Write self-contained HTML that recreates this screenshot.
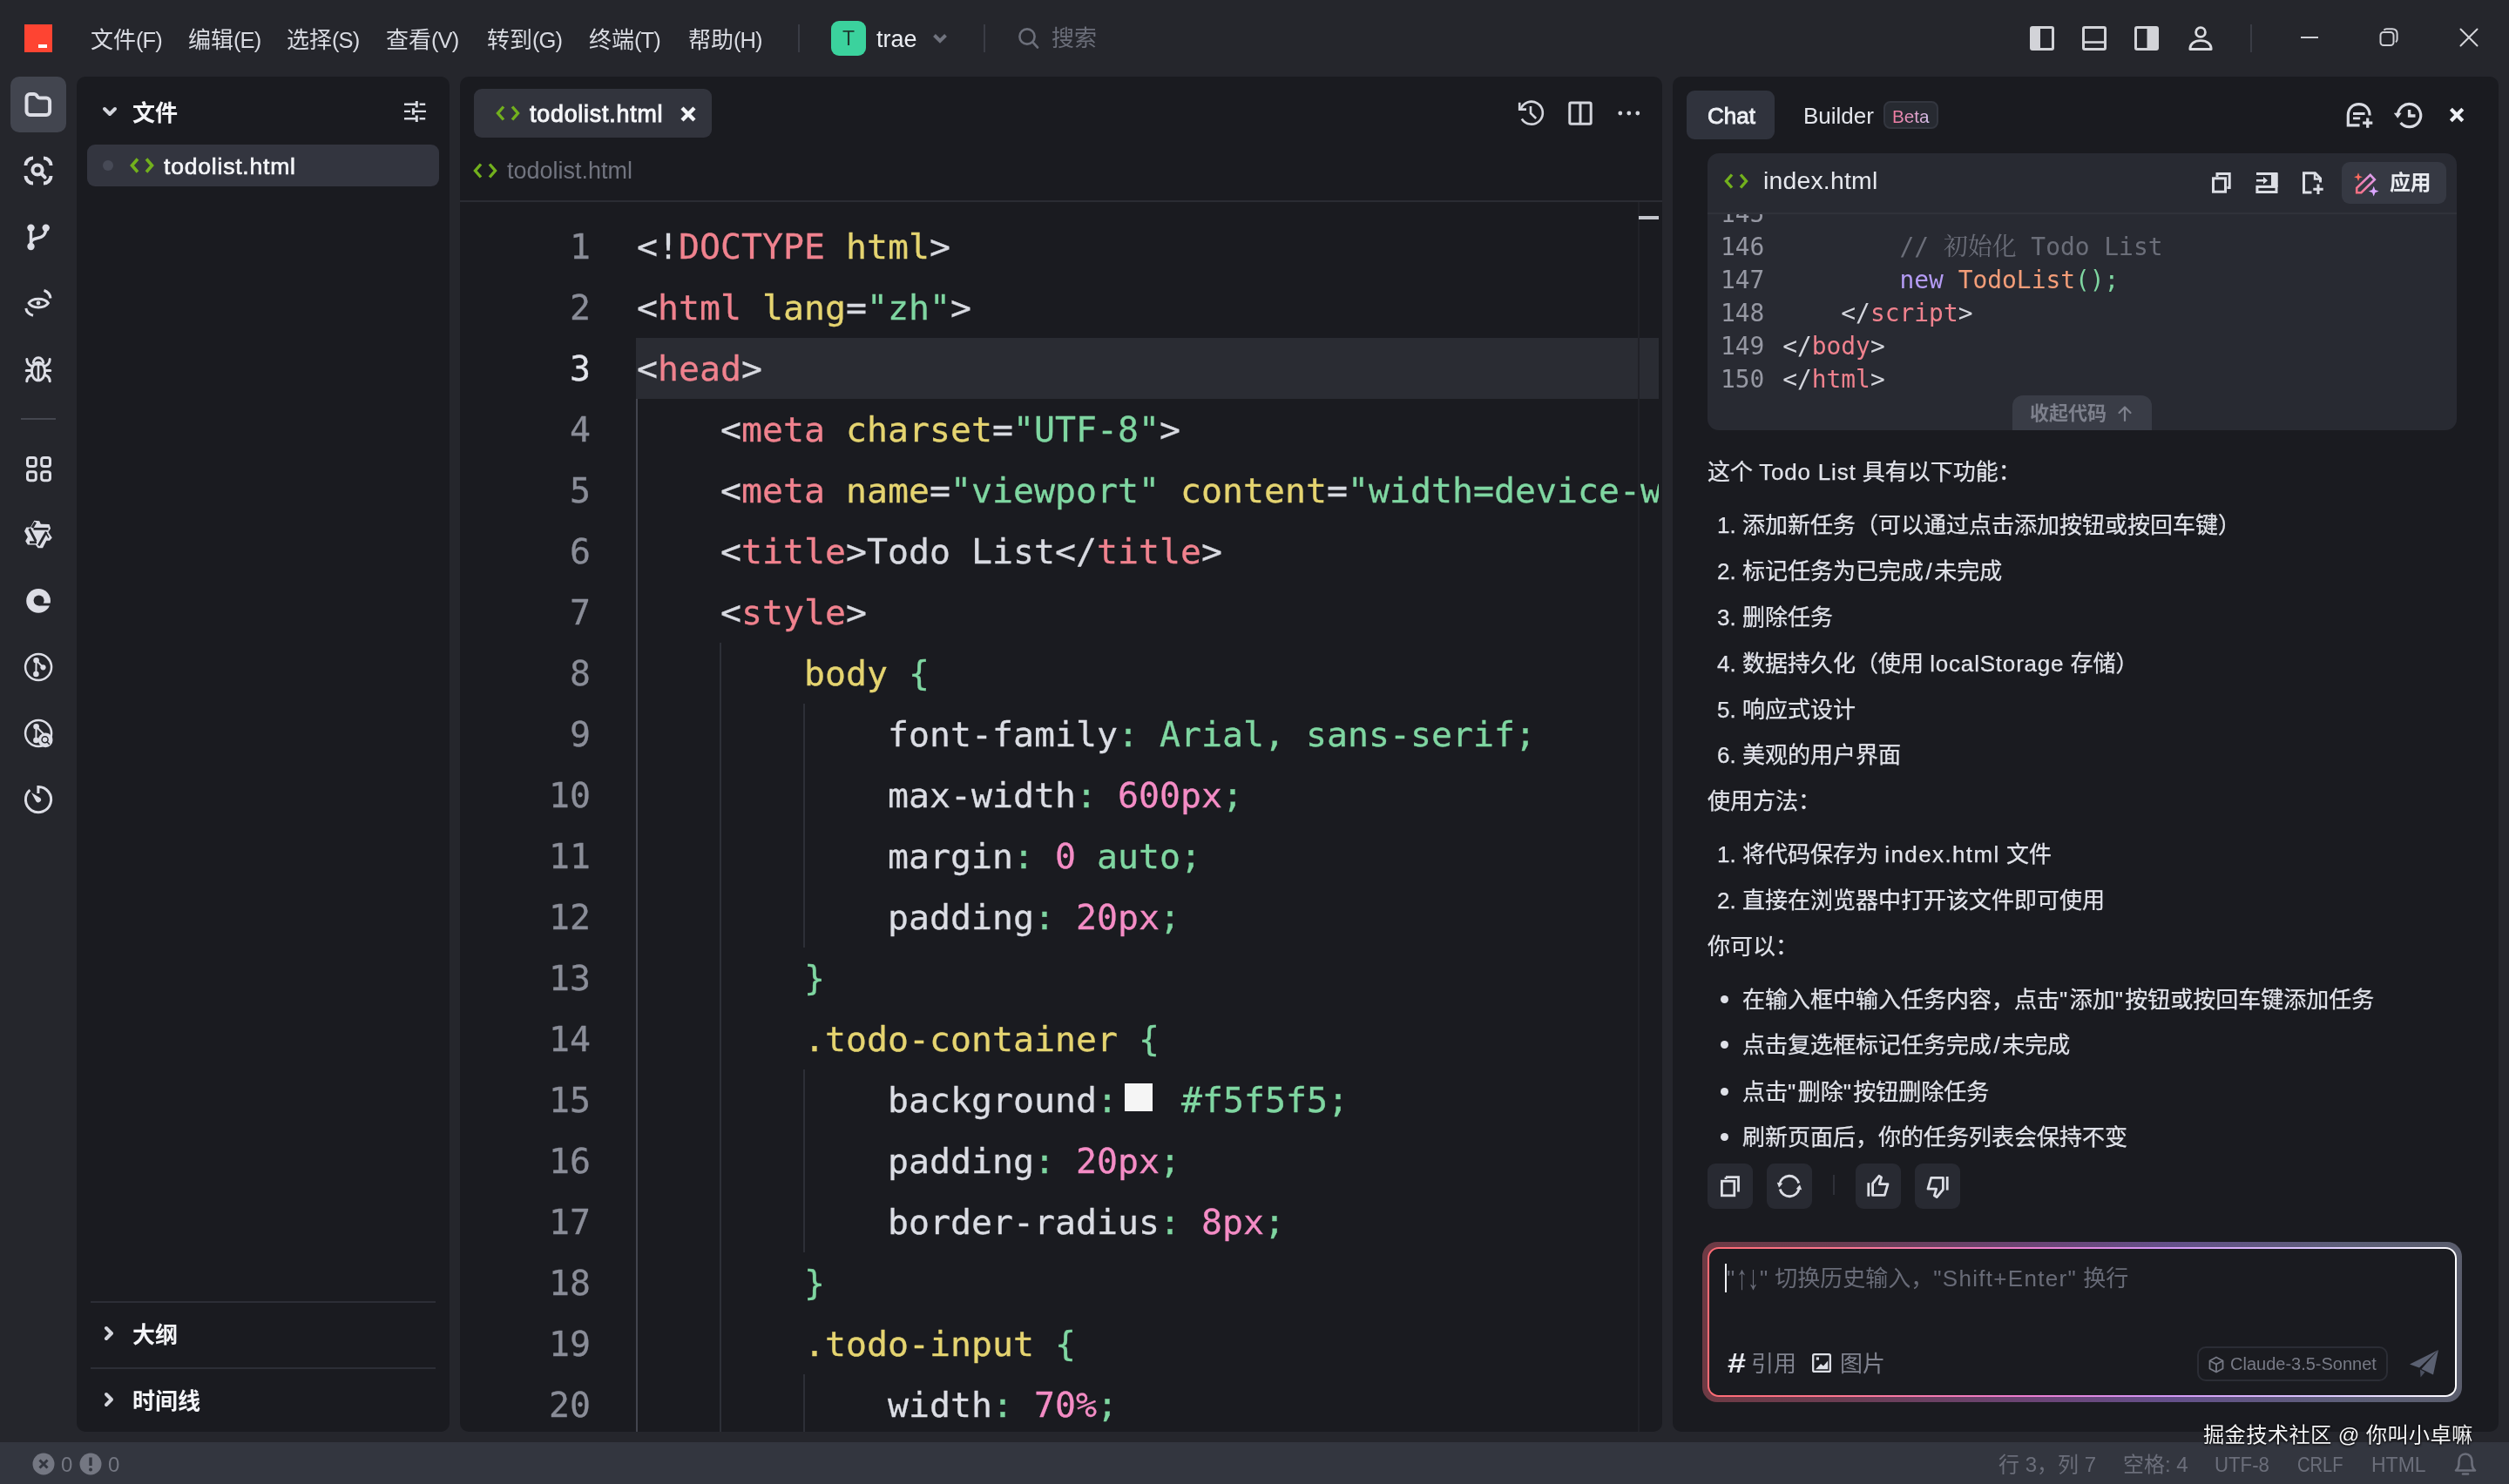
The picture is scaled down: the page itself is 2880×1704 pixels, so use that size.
<!DOCTYPE html>
<html lang="zh">
<head>
<meta charset="UTF-8">
<title>trae</title>
<style>
*{box-sizing:border-box;margin:0;padding:0}
html,body{width:2880px;height:1704px;overflow:hidden;background:#25262c}
body{position:relative;font-family:"Liberation Sans","Noto Sans CJK SC",sans-serif;color:#d6d8df;font-size:26px}
.abs{position:absolute}
#root{position:absolute;left:0;top:0;width:2880px;height:1704px;will-change:transform;overflow:hidden}
svg{display:block;position:absolute;overflow:visible}
.panel{position:absolute;background:#1a1b20;border-radius:10px;top:88px;height:1556px;overflow:hidden}
#side{left:88px;width:428px}
#editor{left:528px;width:1380px}
#chat{left:1920px;width:948px}
#status{position:absolute;left:0;top:1656px;width:2880px;height:48px;background:#33363f}
.t{position:absolute;white-space:nowrap;line-height:1}
.menu{color:#d9dbe2;font-size:26px;top:33px}
.mono{font-family:"DejaVu Sans Mono","Liberation Mono","Noto Sans CJK SC",monospace}
.pl{letter-spacing:-.9px;font-size:25.500px}
.sb{-webkit-text-stroke:0.7px currentColor;letter-spacing:0.8px}
.code{position:absolute;left:0;top:0;width:1376px;height:1556px;overflow:hidden;font-size:39.870px;color:#d8dae1;-webkit-text-stroke:.3px}
.code b{font-weight:normal}
.ln{position:absolute;left:0;width:150px;text-align:right;height:70px;line-height:70px;color:#8a8d98;white-space:pre}
.ln.cur{color:#e3e5ec}
.cl{position:absolute;left:203px;height:70px;line-height:70px;white-space:pre}

b.kt{color:#f0828e}b.ka{color:#e5d470}b.ks{color:#7fd6a1}b.kw{color:#dbdde4}b.kn{color:#f48cc5}
i.sw{display:inline-block;width:32px;height:32px;background:#f5f5f5;vertical-align:middle;margin:-14px 9px 0 8px}
.cp{font-size:26px;color:#e1e3ea;-webkit-text-stroke:.25px}
.cc{font-size:27.900px;color:#d4d6dd}
.cc b{font-weight:normal}
.cln{position:absolute;left:15px;height:38px;line-height:38px;white-space:pre}
b.kl{color:#9698a3}b.kc{color:#6b6e79}b.kv{color:#b49bf4}b.ko{color:#f39d78}
.cjk{font-family:"Noto Serif CJK SC",serif;line-height:0}
.la{letter-spacing:.8px}
.ar{display:inline-block;transform:scale(1,1.500);transform-origin:50% 62%;letter-spacing:0px;margin:0 1px}

</style>
</head>
<body>
<div id="root">
<div class="abs" style="left:28px;top:28px;width:32px;height:32px;background:#fe4432"></div>
<div class="abs" style="left:44px;top:51px;width:10px;height:4px;background:#fff"></div>
<div class="t menu" style="left:104px">文件<span class="pl">(F)</span></div>
<div class="t menu" style="left:216px">编辑<span class="pl">(E)</span></div>
<div class="t menu" style="left:329px">选择<span class="pl">(S)</span></div>
<div class="t menu" style="left:443px">查看<span class="pl">(V)</span></div>
<div class="t menu" style="left:559px">转到<span class="pl">(G)</span></div>
<div class="t menu" style="left:676px">终端<span class="pl">(T)</span></div>
<div class="t menu" style="left:790px">帮助<span class="pl">(H)</span></div>
<div class="abs" style="left:916px;top:28px;width:2px;height:32px;background:#3a3c45"></div>
<div class="abs" style="left:954px;top:24px;width:40px;height:40px;border-radius:9px;background:#3bd29d"></div>
<div class="t" style="left:954px;top:33px;width:40px;text-align:center;color:#1d3b30;font-size:23px">T</div>
<div class="t" style="left:1006px;top:32px;color:#eceef3;font-size:27px">trae</div>
<svg style="left:1070px;top:36px" width="18" height="16" viewBox="0 0 18 16"><path d="M2.5 4.5 L9 11 L15.5 4.5" fill="none" stroke="#70737e" stroke-width="4" stroke-linejoin="miter"/></svg>
<div class="abs" style="left:1129px;top:28px;width:2px;height:32px;background:#3a3c45"></div>
<svg style="left:1168px;top:31px" width="26" height="26" viewBox="0 0 26 26"><circle cx="11" cy="11" r="8.6" fill="none" stroke="#6c6f7a" stroke-width="2.6"/><path d="M17.2 17.2 L23 23.5" stroke="#6c6f7a" stroke-width="2.6" stroke-linecap="round"/></svg>
<div class="t" style="left:1207px;top:31px;color:#6a6d78;font-size:26px">搜索</div>
<!-- right icons -->
<svg style="left:2330px;top:30px" width="28" height="28" viewBox="0 0 28 28"><rect x="1.5" y="1.5" width="25" height="25" rx="1.5" fill="none" stroke="#d2d3d8" stroke-width="3"/><rect x="1.5" y="1.5" width="10.5" height="25" fill="#d2d3d8"/></svg>
<svg style="left:2390px;top:30px" width="28" height="28" viewBox="0 0 28 28"><rect x="1.5" y="1.5" width="25" height="25" rx="1.5" fill="none" stroke="#d2d3d8" stroke-width="3"/><path d="M1.5 18.5 H26.5" stroke="#d2d3d8" stroke-width="2.6"/></svg>
<svg style="left:2450px;top:30px" width="28" height="28" viewBox="0 0 28 28"><rect x="1.5" y="1.5" width="25" height="25" rx="1.5" fill="none" stroke="#d2d3d8" stroke-width="3"/><rect x="14.5" y="1.5" width="12" height="25" fill="#d2d3d8"/></svg>
<svg style="left:2512px;top:29px" width="28" height="30" viewBox="0 0 28 30"><circle cx="14" cy="8" r="5.4" fill="none" stroke="#dadbe0" stroke-width="2.8"/><path d="M1.8 27.5 C1.8 21.5 6.5 17.6 14 17.6 C21.5 17.6 26.2 21.5 26.2 27.5 Z" fill="none" stroke="#dadbe0" stroke-width="2.8" stroke-linejoin="round"/></svg>
<div class="abs" style="left:2583px;top:28px;width:2px;height:32px;background:#3a3c45"></div>
<div class="abs" style="left:2641px;top:42px;width:20px;height:2px;background:#cfd0d6"></div>
<svg style="left:2731px;top:32px" width="22" height="22" viewBox="0 0 22 22"><rect x="1.5" y="5" width="15" height="15" rx="3.5" fill="none" stroke="#cfd0d6" stroke-width="2"/><path d="M5.5 2.8 C6.2 1.6 7.2 1.2 8.5 1.2 H15 C18.5 1.2 20.6 3.2 20.6 6.8 V13 C20.6 14.6 20.1 15.6 19 16.3" fill="none" stroke="#cfd0d6" stroke-width="2"/></svg>
<svg style="left:2823px;top:32px" width="22" height="22" viewBox="0 0 22 22"><path d="M1.5 1.5 L20.5 20.5 M20.5 1.5 L1.5 20.5" stroke="#d4d5da" stroke-width="2" stroke-linecap="round"/></svg>

<div class="abs" style="left:12px;top:88px;width:64px;height:64px;border-radius:10px;background:#42454f"></div>
<svg style="left:0;top:88px" width="88" height="900" viewBox="0 88 88 900" fill="none" stroke="#dcdde5" stroke-linecap="round" stroke-linejoin="round">
<!-- folder -->
<path d="M30.5 112 a4 4 0 0 1 4 -4 h4.6 c1.6 0 2.3 .5 3 1.6 l1 1.6 c.7 1 1.400 1.400 2.800 1.400 h7.200 a4 4 0 0 1 4 4 v11.400 a4 4 0 0 1 -4 4 h-18.600 a4 4 0 0 1 -4 -4 z" stroke-width="4"/>
<!-- scan search -->
<g stroke-width="4" stroke-linecap="butt">
<path d="M29.5 190 a8.500 8.500 0 0 1 8.500 -8.500"/><path d="M50 181.500 a8.500 8.500 0 0 1 8.500 8.500"/><path d="M58.500 202 a8.500 8.500 0 0 1 -8.500 8.500"/><path d="M38 210.500 a8.500 8.500 0 0 1 -8.500 -8.500"/>
<circle cx="43" cy="195" r="5.600"/><path d="M47.200 199.200 L51.600 203.600" stroke-linecap="round"/>
</g>
<!-- git branch -->
<g stroke-width="3.400"><path d="M35.500 262 V283"/><path d="M52.700 262 c0 8 -4 10.500 -10 11.500 c-4 .7 -7.200 2 -7.200 6"/></g>
<g fill="#dcdde5" stroke="none"><circle cx="35.500" cy="261.600" r="4.200"/><circle cx="52.700" cy="261.600" r="4.200"/><circle cx="35.500" cy="283" r="4.200"/></g>
<!-- eye -->
<g stroke-width="3"><path d="M33 348 C37 341.500 51 341.500 55.500 348 C51 354.500 37 354.500 33 348 Z"/><path d="M50.500 333.500 C55 335 57.500 338 58 342.500" stroke-linecap="butt"/><path d="M29.800 354 C30.500 358.500 33 361 38 362.300" stroke-linecap="butt"/></g>
<circle cx="44" cy="348" r="2.400" fill="#dcdde5" stroke="none"/>
<!-- bug -->
<g stroke-width="3"><ellipse cx="44" cy="426.500" rx="7.600" ry="10.300"/><path d="M38.200 417.500 C38.500 408.500 49.500 408.500 49.800 417.500" stroke-linecap="butt"/><path d="M40 418.500 H48 M44 419 V436.500" stroke-width="2.600"/><path d="M30.200 425.500 H36 M52 425.500 H57.800"/><path d="M30.800 412.500 C31 416.500 33 419.500 36.800 420.500 M57.200 412.500 C57 416.500 55 419.500 51.200 420.500"/><path d="M30.800 437.800 C31 434 33 431.500 36.800 430.500 M57.200 437.800 C57 434 55 431.500 51.200 430.500"/></g>
<!-- grid -->
<g stroke-width="3"><rect x="31.500" y="525.500" width="9.800" height="10" rx="2.600"/><rect x="47.700" y="525.500" width="9.800" height="10" rx="2.600"/><rect x="31.500" y="541.700" width="9.800" height="10" rx="2.600"/><rect x="47.700" y="541.700" width="9.800" height="10" rx="2.600"/></g>
<!-- qwen -->
<path d="M39.300 597.800 L45.200 598.200 L46.800 601.800 L56.500 602.100 L58.100 606.700 L55.400 611 L59.800 617.400 L57 620.700 L53.300 620.700 L49 629.300 L43.600 629.300 L40.900 625.500 L31.900 625.500 L29.200 621.200 L31.900 616.400 L28 609.900 L30.300 605.600 L35 605.600 Z" fill="#dcdde5" stroke="none"/>
<g stroke="#25262c" stroke-width="2.800" stroke-linecap="butt"><path d="M38.500 607.300 H55.500"/><path d="M33.600 607 L41.200 621.500"/><path d="M53.200 610.800 L44.300 626.500"/><path d="M40.800 599.600 L37 606"/><path d="M34 622.700 H42"/><path d="M52.500 611.500 L56 617.500" stroke-width="1.600"/></g>
<!-- C logo -->
<circle cx="44.100" cy="689.900" r="13.900" fill="#dcdde5" stroke="none"/>
<circle cx="44.600" cy="689.400" r="6" fill="#25262c" stroke="none"/>
<rect x="44.600" y="692.600" width="14" height="2.900" fill="#25262c" stroke="none"/>
<!-- git circle -->
<circle cx="44.100" cy="766.100" r="15" stroke-width="2.500"/>
<path d="M41.600 758.200 L41.400 774 M41.600 758.200 L49.500 766.300" stroke-width="2"/>
<g fill="#dcdde5" stroke="none"><circle cx="41.600" cy="758.200" r="3.300"/><circle cx="49.500" cy="766.300" r="3.100"/><circle cx="41.400" cy="774" r="3.300"/></g>
<!-- git circle search -->
<circle cx="44.100" cy="842.100" r="15" stroke-width="2.500"/>
<path d="M41.600 834.200 L41.400 850 M41.600 834.200 L49.500 842.300" stroke-width="2"/>
<g fill="#dcdde5" stroke="none"><circle cx="41.600" cy="834.200" r="3.300"/><circle cx="41.400" cy="850" r="3.300"/><circle cx="52.200" cy="849.900" r="8.300"/></g>
<circle cx="51.600" cy="849.200" r="3.500" stroke="#25262c" stroke-width="1.500"/><path d="M54.200 851.900 L56.600 854.400" stroke="#25262c" stroke-width="1.500"/>
<!-- timer -->
<path d="M43.900 911 V903.500 A14.600 14.600 0 1 1 34.400 907.100" stroke-width="3" stroke-linecap="butt" stroke-linejoin="miter"/>
<path d="M36 910.200 L46.300 916.200 A3 3 0 1 1 41.500 920.200 Z" fill="#dcdde5" stroke="none"/>
</svg>
<div class="abs" style="left:24px;top:480px;width:40px;height:2px;background:#44464f"></div>

<div class="panel" id="side">
<svg style="left:28px;top:33px" width="20" height="16" viewBox="0 0 20 16"><path d="M4 4 L10 10 L16 4" fill="none" stroke="#d3d5dc" stroke-width="4" stroke-linecap="round" stroke-linejoin="round"/></svg>
<div class="t" style="left:64px;top:29px;font-size:26px;font-weight:bold;color:#f4f5f8">文件</div>
<svg style="left:360px;top:12px" width="60" height="60" viewBox="448 100 60 60" fill="none" stroke="#d8dae1" stroke-width="2.400" stroke-linecap="butt"><path d="M464 119.800 H478.300 M481.600 119.800 H488.200 M464 127.900 H471 M474.400 127.900 H489 M464 136.200 H478.300 M481.600 136.200 H488.200"/><path d="M478.300 116 V123.500 M474.400 124.200 V131.700 M478.300 132.400 V140" stroke-width="3"/></svg>
<div class="abs" style="left:12px;top:78px;width:404px;height:48px;border-radius:9px;background:#33353f"></div>
<div class="abs" style="left:30px;top:96px;width:12px;height:12px;border-radius:6px;background:#474a56"></div>
<svg style="left:61px;top:93px" width="28" height="18" viewBox="0 0 28 18" fill="none" stroke="#72b01d" stroke-width="3.600" stroke-linecap="butt" stroke-linejoin="miter"><path d="M9 1.500 L2.500 9 L9 16.500"/><path d="M19 1.500 L25.500 9 L19 16.500"/></svg>
<div class="t sb" style="left:100px;top:90px;font-size:26.500px;color:#f4f5f8">todolist.html</div>
<div class="abs" style="left:16px;top:1406px;width:396px;height:2px;background:#2c2e36"></div>
<svg style="left:30px;top:1433px" width="14" height="20" viewBox="0 0 14 20"><path d="M4 4 L10 10 L4 16" fill="none" stroke="#d3d5dc" stroke-width="4" stroke-linecap="round" stroke-linejoin="round"/></svg>
<div class="t" style="left:64px;top:1431.500px;font-size:26px;font-weight:bold;color:#f4f5f8">大纲</div>
<div class="abs" style="left:16px;top:1482px;width:396px;height:2px;background:#2c2e36"></div>
<svg style="left:30px;top:1509px" width="14" height="20" viewBox="0 0 14 20"><path d="M4 4 L10 10 L4 16" fill="none" stroke="#d3d5dc" stroke-width="4" stroke-linecap="round" stroke-linejoin="round"/></svg>
<div class="t" style="left:64px;top:1507.500px;font-size:26px;font-weight:bold;color:#f4f5f8">时间线</div>

</div>
<div class="panel" id="editor">
<div class="abs" style="left:16px;top:14px;width:273px;height:56px;border-radius:9px;background:#32343d"></div>
<svg style="left:41px;top:33px" width="28" height="18" viewBox="0 0 28 18" fill="none" stroke="#72b01d" stroke-width="3.400"><path d="M9 1.500 L2.500 9 L9 16.500"/><path d="M19 1.500 L25.500 9 L19 16.500"/></svg>
<div class="t sb" style="left:80px;top:29.500px;font-size:26.800px;color:#f4f5f8;-webkit-text-stroke-width:1px">todolist.html</div>
<svg style="left:252px;top:33px" width="20" height="20" viewBox="0 0 20 20"><path d="M3 3 L17 17 M17 3 L3 17" stroke="#f4f5f8" stroke-width="4.400" stroke-linecap="butt"/></svg>
<svg style="left:1200px;top:0" width="180" height="80" viewBox="1728 88 180 80" fill="none" stroke="#d3d5dc" stroke-width="2.600" stroke-linecap="butt" stroke-linejoin="miter"><path d="M1745.500 125.600 A13 13 0 1 1 1746.800 136.500"/><path d="M1744.200 117.800 V125.600 H1752"/><path d="M1757 122 V130 L1763.200 136"/><rect x="1801.800" y="117.900" width="24.400" height="24.400" rx="1.500" stroke-width="3"/><path d="M1814 118 V142" stroke-width="3"/><g fill="#d3d5dc" stroke="none"><circle cx="1859.800" cy="130" r="2.400"/><circle cx="1869.800" cy="130" r="2.400"/><circle cx="1879.800" cy="130" r="2.400"/></g></svg>
<svg style="left:15px;top:99px" width="28" height="18" viewBox="0 0 28 18" fill="none" stroke="#72b01d" stroke-width="3.400"><path d="M9 1.500 L2.500 9 L9 16.500"/><path d="M19 1.500 L25.500 9 L19 16.500"/></svg>
<div class="t" style="left:54px;top:95px;font-size:27px;color:#71747f">todolist.html</div>
<div class="abs" style="left:0;top:142px;width:1380px;height:2px;background:#2a2c33"></div>

<div class="abs" style="left:202px;top:300px;width:1174px;height:70px;background:#2a2c33"></div>
<div class="abs" style="left:202px;top:370px;width:2px;height:1200px;background:#43454e"></div>
<div class="abs" style="left:298px;top:650px;width:2px;height:1000px;background:#2d2f37"></div>
<div class="abs" style="left:394px;top:720px;width:2px;height:280px;background:#2d2f37"></div>
<div class="abs" style="left:394px;top:1140px;width:2px;height:210px;background:#2d2f37"></div>
<div class="abs" style="left:394px;top:1490px;width:2px;height:70px;background:#2d2f37"></div>
<div class="abs" style="left:1352px;top:144px;width:2px;height:1420px;background:#212228"></div>
<div class="abs" style="left:1353px;top:160px;width:23px;height:4px;background:#c3c5cc"></div>
<div class="code mono">
<div class="ln" style="top:160px">1</div><div class="cl" style="top:160px">&lt;!<b class="kt">DOCTYPE</b> <b class="ka">html</b>&gt;</div>
<div class="ln" style="top:230px">2</div><div class="cl" style="top:230px">&lt;<b class="kt">html</b> <b class="ka">lang</b>=<b class="ks">"zh"</b>&gt;</div>
<div class="ln cur" style="top:300px">3</div><div class="cl" style="top:300px">&lt;<b class="kt">head</b>&gt;</div>
<div class="ln" style="top:370px">4</div><div class="cl" style="top:370px">    &lt;<b class="kt">meta</b> <b class="ka">charset</b>=<b class="ks">"UTF-8"</b>&gt;</div>
<div class="ln" style="top:440px">5</div><div class="cl" style="top:440px">    &lt;<b class="kt">meta</b> <b class="ka">name</b>=<b class="ks">"viewport"</b> <b class="ka">content</b>=<b class="ks">"width=device-width, initial-scale=1.0"</b>&gt;</div>
<div class="ln" style="top:510px">6</div><div class="cl" style="top:510px">    &lt;<b class="kt">title</b>&gt;Todo List&lt;/<b class="kt">title</b>&gt;</div>
<div class="ln" style="top:580px">7</div><div class="cl" style="top:580px">    &lt;<b class="kt">style</b>&gt;</div>
<div class="ln" style="top:650px">8</div><div class="cl" style="top:650px">        <b class="ka">body</b> <b class="ks">{</b></div>
<div class="ln" style="top:720px">9</div><div class="cl" style="top:720px">            <b class="kw">font-family</b><b class="ks">: Arial, sans-serif;</b></div>
<div class="ln" style="top:790px">10</div><div class="cl" style="top:790px">            <b class="kw">max-width</b><b class="ks">: </b><b class="kn">600px</b><b class="ks">;</b></div>
<div class="ln" style="top:860px">11</div><div class="cl" style="top:860px">            <b class="kw">margin</b><b class="ks">: </b><b class="kn">0</b><b class="ks"> auto;</b></div>
<div class="ln" style="top:930px">12</div><div class="cl" style="top:930px">            <b class="kw">padding</b><b class="ks">: </b><b class="kn">20px</b><b class="ks">;</b></div>
<div class="ln" style="top:1000px">13</div><div class="cl" style="top:1000px">        <b class="ks">}</b></div>
<div class="ln" style="top:1070px">14</div><div class="cl" style="top:1070px">        <b class="ka">.todo-container</b> <b class="ks">{</b></div>
<div class="ln" style="top:1140px">15</div><div class="cl" style="top:1140px">            <b class="kw">background</b><b class="ks">:</b><i class="sw"></i><b class="ks"> #f5f5f5;</b></div>
<div class="ln" style="top:1210px">16</div><div class="cl" style="top:1210px">            <b class="kw">padding</b><b class="ks">: </b><b class="kn">20px</b><b class="ks">;</b></div>
<div class="ln" style="top:1280px">17</div><div class="cl" style="top:1280px">            <b class="kw">border-radius</b><b class="ks">: </b><b class="kn">8px</b><b class="ks">;</b></div>
<div class="ln" style="top:1350px">18</div><div class="cl" style="top:1350px">        <b class="ks">}</b></div>
<div class="ln" style="top:1420px">19</div><div class="cl" style="top:1420px">        <b class="ka">.todo-input</b> <b class="ks">{</b></div>
<div class="ln" style="top:1490px">20</div><div class="cl" style="top:1490px">            <b class="kw">width</b><b class="ks">: </b><b class="kn">70%</b><b class="ks">;</b></div>
</div>

</div>
<div class="panel" id="chat">
<div class="abs" style="left:16px;top:16px;width:101px;height:56px;border-radius:9px;background:#30333d"></div>
<div class="t sb" style="left:40px;top:32px;font-size:26px;color:#eef0f5;letter-spacing:0px;-webkit-text-stroke-width:.9px">Chat</div>
<div class="t" style="left:150px;top:32px;font-size:26px;color:#e4e6ec">Builder</div>
<div class="abs" style="left:242px;top:28px;width:63px;height:32px;border-radius:8px;background:#272a31;border:2px solid #33363f"></div>
<div class="t" style="left:252px;top:34px;font-size:20.700px;line-height:24px;color:transparent;background:linear-gradient(90deg,#f2789e 0%,#e79ac4 50%,#d6c6f0 100%);-webkit-background-clip:text;background-clip:text">Beta</div>
<svg style="left:760px;top:0" width="188" height="80" viewBox="2680 88 188 80" fill="none" stroke="#d9dbe2" stroke-width="3.200" stroke-linecap="butt" stroke-linejoin="miter"><path d="M2708.500 143.900 H2695.300 V132 C2695.300 124.500 2700.500 119.700 2707.700 119.700 C2714.900 119.700 2720.100 124.500 2720.100 132.600"/><path d="M2701 130.500 H2714.600 M2701 135.800 H2709.200" stroke-width="2.800"/><path d="M2717.700 135.500 V146.700 M2712.100 141.100 H2723.300"/><path d="M2752.500 133 A13.100 13.100 0 1 1 2755.600 141"/><path d="M2747.800 129.800 L2752.200 135.800 L2756.600 129.800 Z" fill="#d9dbe2" stroke="none"/><path d="M2765.600 126 V133 H2772.500" stroke-width="3.400"/><path d="M2813.400 125.300 L2826.800 138.700 M2826.800 125.300 L2813.400 138.700" stroke="#eef0f5" stroke-width="4.200"/></svg>
<div class="abs" style="left:40px;top:88px;width:860px;height:318px;border-radius:13px;background:#282a32;overflow:hidden">
<svg style="left:19px;top:23px" width="28" height="18" viewBox="0 0 28 18" fill="none" stroke="#72b01d" stroke-width="3.400"><path d="M9 1.500 L2.500 9 L9 16.500"/><path d="M19 1.500 L25.500 9 L19 16.500"/></svg>
<div class="t" style="left:64px;top:17px;font-size:28.400px;color:#e6e8ee;letter-spacing:.2px">index.html</div>
<svg style="left:560px;top:0" width="300" height="70" viewBox="2520 176 300 70" fill="none" stroke="#dcdee5" stroke-width="3" stroke-linecap="butt" stroke-linejoin="miter"><rect x="2540.500" y="204.800" width="14" height="15.400"/><path d="M2545 203 V199.500 H2559.200 V215.500 H2556.500"/><path d="M2590 199.500 H2613 V214"/><rect x="2607" y="199" width="7.500" height="16" fill="#dcdee5" stroke="none"/><rect x="2590.900" y="214.400" width="22.100" height="6.100" stroke-width="3"/><path d="M2590 207.300 H2600.500" stroke-width="2.600"/><path d="M2598 203 L2603 207.300 L2598 211.600 Z" fill="#dcdee5" stroke="none"/><path d="M2653.500 221 H2644.500 V198.800 H2657.500 L2663.500 204.800 V209.500"/><path d="M2657 199 V205.500 H2663.500" stroke-width="2.400"/><path d="M2661 211.500 V223 M2655.300 217.300 H2666.700" stroke-width="3"/></svg>
<div class="abs" style="left:728px;top:10px;width:120px;height:48px;border-radius:9px;background:#363943"></div>
<svg style="left:728px;top:10px" width="60" height="48" viewBox="2688 186 60 48" fill="none" stroke-linecap="butt" stroke-linejoin="miter"><defs><linearGradient id="ag" gradientUnits="userSpaceOnUse" x1="2704" y1="222" x2="2726" y2="200"><stop offset="0" stop-color="#f76c78"/><stop offset="0.550" stop-color="#ee86c0"/><stop offset="1" stop-color="#d7a4f7"/></linearGradient></defs><path d="M2705.200 221.300 V215.700 L2720.800 200.900 L2725.800 206.300 L2710.400 221.300 Z" stroke="url(#ag)" stroke-width="2.600"/><path d="M2707 198.300 L2708.300 202 L2712 203.300 L2708.300 204.600 L2707 208.300 L2705.700 204.600 L2702 203.300 L2705.700 202 Z" fill="#ff6b5e"/><path d="M2724.700 213.800 L2726.300 218 L2730.500 219.600 L2726.300 221.200 L2724.700 225.400 L2723.100 221.200 L2718.900 219.600 L2723.100 218 Z" fill="#dba6ff"/></svg>
<div class="t" style="left:783px;top:22px;font-size:24px;font-weight:bold;color:#e9ebf0;letter-spacing:-.5px">应用</div>
<div class="abs" style="left:0;top:68px;width:860px;height:2px;background:#30323a"></div>
<div class="abs mono cc" style="left:0;top:70px;width:860px;height:248px;overflow:hidden">
<div class="cln" style="top:-19px"><b class="kl">145</b></div><div class="cln" style="top:-19px;left:19px">    </div>
<div class="cln" style="top:19px"><b class="kl">146</b></div><div class="cln" style="top:19px;left:19px">            <b class="kc">// <span class="cjk">初始化</span> Todo List</b></div>
<div class="cln" style="top:57px"><b class="kl">147</b></div><div class="cln" style="top:57px;left:19px">            <b class="kv">new</b> <b class="ko">TodoList</b><b class="ks">();</b></div>
<div class="cln" style="top:95px"><b class="kl">148</b></div><div class="cln" style="top:95px;left:19px">        &lt;/<b class="kt">script</b>&gt;</div>
<div class="cln" style="top:133px"><b class="kl">149</b></div><div class="cln" style="top:133px;left:19px">    &lt;/<b class="kt">body</b>&gt;</div>
<div class="cln" style="top:171px"><b class="kl">150</b></div><div class="cln" style="top:171px;left:19px">    &lt;/<b class="kt">html</b>&gt;</div>
</div>
<div class="abs" style="left:350px;top:278px;width:160px;height:40px;border-radius:12px 12px 0 0;background:#393c46"></div>
<div class="t" style="left:370px;top:288px;font-size:22px;font-weight:bold;color:#7d808c">收起代码</div>
<svg style="left:470px;top:289px" width="18" height="20" viewBox="0 0 18 20" fill="none" stroke="#7d808c" stroke-width="2.200" stroke-linecap="round" stroke-linejoin="round"><path d="M9 18 V2.500 M2.500 9 L9 2.500 L15.500 9"/></svg>
</div>
<div class="t cp" style="left:40px;top:441px">这个 <span class="la">Todo List</span> 具有以下功能：</div>
<div class="t cp" style="left:51px;top:502px">1.</div>
<div class="t cp" style="left:80px;top:502px">添加新任务（可以通过点击添加按钮或按回车键）</div>
<div class="t cp" style="left:51px;top:555px">2.</div>
<div class="t cp" style="left:80px;top:555px">标记任务为已完成<span style="margin:0 2.500px">/</span>未完成</div>
<div class="t cp" style="left:51px;top:608px">3.</div>
<div class="t cp" style="left:80px;top:608px">删除任务</div>
<div class="t cp" style="left:51px;top:661px">4.</div>
<div class="t cp" style="left:80px;top:661px">数据持久化（使用 <span class="la">localStorage</span> 存储）</div>
<div class="t cp" style="left:51px;top:714px">5.</div>
<div class="t cp" style="left:80px;top:714px">响应式设计</div>
<div class="t cp" style="left:51px;top:766px">6.</div>
<div class="t cp" style="left:80px;top:766px">美观的用户界面</div>
<div class="t cp" style="left:40px;top:819px">使用方法：</div>
<div class="t cp" style="left:51px;top:880px">1.</div>
<div class="t cp" style="left:80px;top:880px">将代码保存为 <span style="letter-spacing:1.400px">index.html</span> 文件</div>
<div class="t cp" style="left:51px;top:933px">2.</div>
<div class="t cp" style="left:80px;top:933px">直接在浏览器中打开该文件即可使用</div>
<div class="t cp" style="left:40px;top:986px">你可以：</div>
<div class="abs" style="left:55px;top:1055px;width:9px;height:9px;border-radius:5px;background:#dfe1e8"></div>
<div class="t cp" style="left:80px;top:1047px">在输入框中输入任务内容，点击<span style="letter-spacing:2.400px">"</span>添加<span style="letter-spacing:2.400px">"</span>按钮或按回车键添加任务</div>
<div class="abs" style="left:55px;top:1107px;width:9px;height:9px;border-radius:5px;background:#dfe1e8"></div>
<div class="t cp" style="left:80px;top:1099px">点击复选框标记任务完成<span style="margin:0 2.500px">/</span>未完成</div>
<div class="abs" style="left:55px;top:1161px;width:9px;height:9px;border-radius:5px;background:#dfe1e8"></div>
<div class="t cp" style="left:80px;top:1153px">点击<span style="letter-spacing:2.400px">"</span>删除<span style="letter-spacing:2.400px">"</span>按钮删除任务</div>
<div class="abs" style="left:55px;top:1213px;width:9px;height:9px;border-radius:5px;background:#dfe1e8"></div>
<div class="t cp" style="left:80px;top:1205px">刷新页面后，你的任务列表会保持不变</div>
<div class="abs" style="left:40px;top:1248px;width:52px;height:52px;border-radius:9px;background:#282a32"></div>
<div class="abs" style="left:108px;top:1248px;width:52px;height:52px;border-radius:9px;background:#282a32"></div>
<div class="abs" style="left:210px;top:1248px;width:52px;height:52px;border-radius:9px;background:#282a32"></div>
<div class="abs" style="left:278px;top:1248px;width:52px;height:52px;border-radius:9px;background:#282a32"></div>
<div class="abs" style="left:184px;top:1261px;width:2px;height:23px;background:#2e3038"></div>
<svg style="left:30px;top:1238px" width="320" height="72" viewBox="1950 1326 320 72" fill="none" stroke="#dcdee5" stroke-width="2.800" stroke-linecap="butt" stroke-linejoin="miter"><rect x="1976.400" y="1356.200" width="14.400" height="16.600"/><path d="M1981 1351.700 H1995.500 V1368.500 M1981 1351.700 V1354"/><path d="M2042.800 1359.500 A11.300 11.300 0 0 1 2064.800 1358.500" /><path d="M2065.200 1364.500 A11.300 11.300 0 0 1 2043.200 1365.500"/><path d="M2039.800 1357.800 L2046.300 1358.800 L2042 1363.800 Z" fill="#dcdee5" stroke="none"/><path d="M2068.200 1366.200 L2061.700 1365.200 L2066 1360.200 Z" fill="#dcdee5" stroke="none"/><path d="M2144.800 1358.200 V1373.800" /><path d="M2149.600 1372.400 V1359 L2156.800 1350.300 L2159.600 1352 L2157.300 1359.600 H2167 L2163.300 1372.400 Z" stroke-linejoin="round"/><path d="M2235.200 1351 V1366.600"/><path d="M2230.400 1352.400 V1365.800 L2223.200 1374.500 L2220.400 1372.800 L2222.700 1365.200 H2213 L2216.700 1352.400 Z" stroke-linejoin="round"/></svg>
<div class="abs" style="left:34px;top:1338px;width:872px;height:184px;border-radius:17px;background:linear-gradient(90deg,#6e3a44 0%,#6b3d52 18%,#6b4577 45%,#64508a 62%,#5d5f78 85%,#5a5d6c 100%)"></div>
<div class="abs" style="left:40px;top:1343.500px;width:860px;height:172.500px;border-radius:13px;background:linear-gradient(90deg,#ff6b74 0%,#ff7892 18%,#ee7ed0 42%,#d496f5 60%,#dcc8ff 82%,#ffffff 100%)"></div>
<div class="abs" style="left:42.300px;top:1345.800px;width:855.400px;height:167.900px;border-radius:10.700px;background:#1a1b20"></div>
<div class="abs" style="left:60px;top:1363px;width:2px;height:33px;background:#f0f1f5"></div>
<div class="t" style="left:62px;top:1367px;font-size:26px;color:#686b77"><span class="la">"</span><span class="ar">↑↓</span><span class="la">"</span> 切换历史输入，<span class="la" style="letter-spacing:1.300px">"Shift+Enter"</span> 换行</div>
<div class="t" style="left:63px;top:1461px;font-size:32px;color:#e6e8ee;font-weight:bold;transform:scaleX(1.180);transform-origin:0 50%">#</div>
<div class="t" style="left:90px;top:1465px;font-size:26px;color:#80838f">引用</div>
<svg style="left:150px;top:1452px" width="50" height="50" viewBox="2070 1540 50 50" fill="none" stroke="#dfe1e8" stroke-width="2.300" stroke-linejoin="round"><rect x="2081.200" y="1555.100" width="19.600" height="19.800" rx="1.500"/><path d="M2084 1572.300 L2090 1566 L2093 1568.600 L2098.200 1562.600 V1572.300 Z" fill="#dfe1e8" stroke="none"/><rect x="2084.800" y="1558.400" width="3.200" height="3.200" fill="#dfe1e8" stroke="none"/></svg>
<div class="t" style="left:192px;top:1465px;font-size:26px;color:#80838f">图片</div>
<div class="abs" style="left:602px;top:1458px;width:219px;height:40px;border-radius:10px;border:2px solid #2b2d35"></div>
<svg style="left:615px;top:1469px" width="18" height="20" viewBox="0 0 18 20" fill="none" stroke="#777a86" stroke-width="1.800" stroke-linejoin="round"><path d="M9 1.500 L16.500 5.500 V14.500 L9 18.500 L1.500 14.500 V5.500 Z"/><path d="M1.500 5.500 L9 9.500 L16.500 5.500 M9 9.500 V18.500"/></svg>
<div class="t" style="left:640px;top:1468px;font-size:20px;color:#777a86">Claude-3.5-Sonnet</div>
<svg style="left:845px;top:1461px" width="36" height="34" viewBox="0 0 36 34"><path d="M34 1 L1 17.500 L12 21.500 Z" fill="#5a6071"/><path d="M34 1 L14.500 23 L28 29.500 Z" fill="#5a6071"/><path d="M13 23.500 L13.500 32.500 L18.500 26.500 Z" fill="#4b5060"/></svg>

</div>
<div id="status">
<svg style="left:37px;top:12px" width="26" height="26" viewBox="0 0 26 26"><circle cx="13" cy="13" r="12.500" fill="#747782"/><path d="M8.500 8.500 L17.500 17.500 M17.500 8.500 L8.500 17.500" stroke="#33363f" stroke-width="3"/></svg>
<div class="t" style="left:70px;top:14px;font-size:24px;color:#747782">0</div>
<svg style="left:91px;top:12px" width="26" height="26" viewBox="0 0 26 26"><circle cx="13" cy="13" r="12.500" fill="#747782"/><path d="M13 5.500 V15" stroke="#33363f" stroke-width="3.400"/><circle cx="13" cy="19.500" r="2" fill="#33363f"/></svg>
<div class="t" style="left:124px;top:14px;font-size:24px;color:#747782">0</div>
<div class="t" style="left:2294px;top:14px;font-size:24px;color:#6b6e7a">行 3，列 7</div>
<div class="t" style="left:2437px;top:14px;font-size:24px;color:#6b6e7a">空格: 4</div>
<div class="t" style="left:2542px;top:14px;font-size:24px;color:#6b6e7a;transform:scaleX(.926);transform-origin:0 0">UTF-8</div>
<div class="t" style="left:2637px;top:14px;font-size:24px;color:#6b6e7a;transform:scaleX(.84);transform-origin:0 0">CRLF</div>
<div class="t" style="left:2722px;top:14px;font-size:24px;color:#6b6e7a;transform:scaleX(.958);transform-origin:0 0">HTML</div>
<svg style="left:2817px;top:11px" width="26" height="28" viewBox="0 0 26 28" fill="none" stroke="#6b6e7a" stroke-width="2.600" stroke-linejoin="round" stroke-linecap="round"><path d="M2 21.500 H24 C21.500 19.500 20.500 17 20.500 13 V11 C20.500 6 17.500 2.500 13 2.500 C8.500 2.500 5.500 6 5.500 11 V13 C5.500 17 4.500 19.500 2 21.500 Z"/><path d="M10 25.500 H16"/></svg>

</div>
<div class="t" style="left:2529px;top:1636px;font-size:24.300px;letter-spacing:.3px;color:#f5f5f7;text-shadow:0 1px 3px rgba(0,0,0,.9),0 0 2px rgba(0,0,0,.8)">掘金技术社区 @ 你叫小卓嘛</div>

</div>
</body>
</html>
